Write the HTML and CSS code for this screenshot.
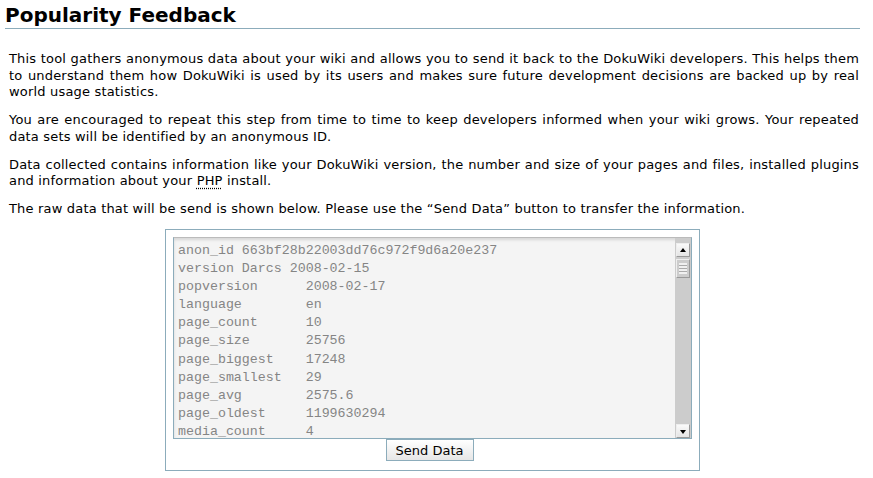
FILE: index.html
```html
<!DOCTYPE html>
<html lang="en">
<head>
    <meta charset="UTF-8">
    <title>Popularity Feedback</title>
    <link rel="stylesheet" href="styles.css">
</head>
<body>
    <div class="page">
        <h1>Popularity Feedback</h1>
        <div class="level1">
            <p>This tool gathers anonymous data about your wiki and allows you to send it back to the DokuWiki developers. This helps them to understand them how DokuWiki is used by its users and makes sure future development decisions are backed up by real world usage statistics.</p>
            <p>You are encouraged to repeat this step from time to time to keep developers informed when your wiki grows. Your repeated data sets will be identified by an anonymous ID.</p>
            <p>Data collected contains information like your DokuWiki version, the number and size of your pages and files, installed plugins and information about your <abbr title="Hypertext Preprocessor">PHP</abbr> install.</p>
            <p>The raw data that will be send is shown below. Please use the &ldquo;Send Data&rdquo; button to transfer the information.</p>

            <form class="popularity" action="#" method="post">
                <div class="rawbox">
                    <pre class="rawdata">anon_id 663bf28b22003dd76c972f9d6a20e237
version Darcs 2008-02-15
popversion      2008-02-17
language        en
page_count      10
page_size       25756
page_biggest    17248
page_smallest   29
page_avg        2575.6
page_oldest     1199630294
media_count     4
media_size      73120</pre>
                    <div class="scrollbar">
                        <span class="sb-btn sb-up"></span>
                        <span class="sb-thumb"></span>
                        <span class="sb-track"></span>
                        <span class="sb-btn sb-down"></span>
                    </div>
                </div>
                <div class="actions">
                    <input type="submit" class="button" value="Send Data">
                </div>
            </form>
        </div>
    </div>
</body>
</html>
```

FILE: styles.css
```css
body {
    margin: 0;
    background-color: #fff;
    color: #000;
    font-family: 'DejaVu Sans', Verdana, sans-serif;
    font-size: 13px;
}

.page {
    padding: 0 13px 0 5px;
}

h1 {
    font-size: 20px;
    font-weight: bold;
    margin: 0;
    padding-top: 3px;
    line-height: 25px;
    border-bottom: 1px solid #8cacbb;
}

.level1 {
    padding: 0 1px 0 4px;
    margin-top: 22px;
}

p {
    margin: 0 0 11.5px 0;
    line-height: 16.5px;
    letter-spacing: 0.18px;
    text-align: justify;
}

abbr {
    text-decoration: underline dotted #000;
    text-underline-offset: 3px;
}

/* caja con los datos */
.popularity {
    margin: 10px 0 0 156px;
    border: 1px solid #8cacbb;
    padding: 7px;
    box-sizing: border-box;
    width: 535px;
    height: 242px;
}

.rawbox {
    display: flex;
    height: 200px;
    border: 1px solid #8cacbb;
    border-top-color: #bbb;
    background-color: #f4f4f4;
    box-shadow: inset 0 2px 3px rgba(0, 0, 0, 0.12);
}

.rawdata {
    flex: 1;
    margin: 0;
    padding: 4px 4px 0 4px;
    overflow: hidden;
    font-family: 'Liberation Mono', 'Courier New', monospace;
    font-size: 13.3px;
    line-height: 18.1px;
    color: #858585;
}

.scrollbar {
    width: 15px;
    display: flex;
    flex-direction: column;
    background-color: #ccc;
    padding: 5px 0 0 1px;
}

.sb-btn,
.sb-thumb {
    display: block;
    width: 14px;
    box-sizing: border-box;
    border: 1px solid #999;
    border-top-color: #eee;
    border-left-color: #eee;
    background: linear-gradient(#fafafa, #e4e4e4);
    position: relative;
}

.sb-btn {
    height: 14px;
}

.sb-up::after,
.sb-down::after {
    content: "";
    position: absolute;
    left: 3px;
    width: 0;
    height: 0;
    border-left: 3px solid transparent;
    border-right: 3px solid transparent;
}

.sb-up::after {
    top: 4px;
    border-bottom: 4px solid #000;
}

.sb-down::after {
    top: 5px;
    border-top: 4px solid #000;
}

.sb-thumb {
    height: 19px;
    margin-top: 2px;
    background: repeating-linear-gradient(#f0f0f0 0 2px, #aaa 2px 3px);
    background-clip: content-box;
    padding: 3px 2px;
    background-color: #f0f0f0;
}

.sb-track {
    flex: 1;
}

.actions {
    text-align: center;
    padding-right: 6px;
    margin-top: 0;
}

.button {
    font-family: 'DejaVu Sans', Verdana, sans-serif;
    font-size: 13px;
    color: #000;
    width: 88px;
    height: 22px;
    padding: 0;
    border: 1px solid #8cacbb;
    background: linear-gradient(#fff, #e6e6e6);
    cursor: pointer;
}
```
